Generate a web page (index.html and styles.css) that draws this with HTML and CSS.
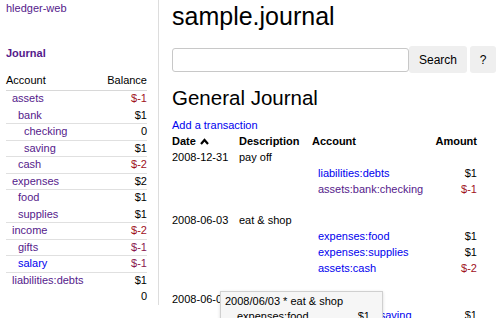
FILE: index.html
```html
<!DOCTYPE html>
<html lang="en">
<head>
  <meta charset="UTF-8" />
  <title>sample.journal - hledger-web</title>
  <link rel="stylesheet" href="styles.css">
</head>
<body>

  <div class="sidebar">
    <a class="brand" href="#">hledger-web</a>
    <a class="journal-link" href="#">Journal</a>
    <table class="balances">
      <tr class="head">
        <th>Account</th>
        <th class="amt">Balance</th>
      </tr>
      <tr><td class="d0"><a href="#">assets</a></td><td class="amt neg">$-1</td></tr>
      <tr><td class="d1"><a href="#">bank</a></td><td class="amt">$1</td></tr>
      <tr class="sep"><td class="d2"><a href="#">checking</a></td><td class="amt">0</td></tr>
      <tr class="sep"><td class="d2"><a href="#">saving</a></td><td class="amt">$1</td></tr>
      <tr class="sep"><td class="d1"><a href="#">cash</a></td><td class="amt neg">$-2</td></tr>
      <tr class="sep"><td class="d0"><a href="#">expenses</a></td><td class="amt">$2</td></tr>
      <tr class="sep"><td class="d1"><a href="#">food</a></td><td class="amt">$1</td></tr>
      <tr><td class="d1"><a href="#">supplies</a></td><td class="amt">$1</td></tr>
      <tr class="sep"><td class="d0"><a href="#">income</a></td><td class="amt neg">$-2</td></tr>
      <tr class="sep"><td class="d1"><a href="#">gifts</a></td><td class="amt neg2">$-1</td></tr>
      <tr class="sep"><td class="d1"><a class="fresh" href="#">salary</a></td><td class="amt neg2">$-1</td></tr>
      <tr class="sep"><td class="d0"><a href="#">liabilities:debts</a></td><td class="amt">$1</td></tr>
      <tr><td></td><td class="amt">0</td></tr>
    </table>
  </div>

  <div class="main">
    <h1>sample.journal</h1>
    <form class="search">
      <input type="text" class="search-box">
      <button type="button" class="btn">Search</button>
      <button type="button" class="btn help">?</button>
    </form>
    <h2>General Journal</h2>
    <a class="add-link" href="#">Add a transaction</a>

    <table class="journal">
      <tr class="head">
        <th class="c-date">Date
          <svg class="sort-icon" width="9" height="7" viewBox="0 0 9 7"><path d="M1 6 L4.5 2 L8 6" fill="none" stroke="#000" stroke-width="2.2"/></svg>
        </th>
        <th class="c-desc">Description</th>
        <th class="c-acct">Account</th>
        <th class="amt">Amount</th>
      </tr>
      <tr><td>2008-12-31</td><td>pay off</td><td></td><td></td></tr>
      <tr class="posting"><td></td><td></td><td><a class="fresh" href="#">liabilities:debts</a></td><td class="amt">$1</td></tr>
      <tr class="posting"><td></td><td></td><td><a href="#">assets:bank:checking</a></td><td class="amt neg">$-1</td></tr>
      <tr class="blank"><td colspan="4"></td></tr>
      <tr><td>2008-06-03</td><td>eat &amp; shop</td><td></td><td></td></tr>
      <tr class="posting"><td></td><td></td><td><a class="fresh" href="#">expenses:food</a></td><td class="amt">$1</td></tr>
      <tr class="posting"><td></td><td></td><td><a class="fresh" href="#">expenses:supplies</a></td><td class="amt">$1</td></tr>
      <tr class="posting"><td></td><td></td><td><a class="fresh" href="#">assets:cash</a></td><td class="amt neg">$-2</td></tr>
      <tr class="blank"><td colspan="4"></td></tr>
      <tr><td>2008-06-02</td><td>save</td><td></td><td></td></tr>
      <tr class="posting"><td></td><td></td><td><a class="fresh" href="#">assets:bank:saving</a></td><td class="amt">$1</td></tr>
    </table>

    <div class="tip">
      <div>2008/06/03 * eat &amp; shop</div>
      <div class="tip-line"><span>expenses:food</span><span>$1</span></div>
    </div>
  </div>

</body>
</html>
```

FILE: styles.css
```css
* {
  box-sizing: border-box;
}
body {
  margin: 0;
  display: flex;
  align-items: flex-start;
  font-family: "Liberation Sans", Arial, sans-serif;
  font-size: 11px;
  color: #000;
  background: #fff;
}
a {
  color: #551a8b;
  text-decoration: none;
}
a.fresh {
  color: #0000ee;
}
table {
  border-collapse: collapse;
}
th {
  text-align: left;
  font-weight: normal;
}
td, th {
  padding: 0;
}
.amt {
  text-align: right;
}
.neg {
  color: #a0101c;
}
.neg2 {
  color: #8a1450;
}

/* sidebar */
.sidebar {
  width: 159px;
  height: 305px;
  flex-shrink: 0;
  padding: 0 11px 0 6px;
  border-right: 1px solid #ddd;
}
.brand {
  display: block;
  line-height: 16px;
}
.journal-link {
  display: block;
  margin-top: 29px;
  line-height: 16px;
  font-weight: bold;
}
.balances {
  width: 141px;
  margin-top: 11px;
}
.balances .head th {
  line-height: 16px;
  padding-bottom: 2px;
  border-bottom: 1px solid #d8d8d8;
}
.balances td {
  line-height: 15.5px;
  border-top: 1px solid transparent;
}
.balances tr.sep td {
  border-top-color: #e0e0e0;
}
.balances .d0 { padding-left: 6px; }
.balances .d1 { padding-left: 12px; }
.balances .d2 { padding-left: 18px; }

/* main */
.main {
  position: relative;
  flex: 1;
  padding: 0 7px 0 13px;
}
h1 {
  margin: 2px 0 0;
  font-size: 25px;
  font-weight: normal;
  line-height: 28px;
}
.search {
  display: flex;
  align-items: center;
  margin: 16px 0 0;
}
.search-box {
  width: 237px;
  height: 24px;
  margin: 0;
  border: 1px solid #c8c8c8;
  border-radius: 3px;
}
.btn {
  height: 27px;
  margin: 0 3px 0 0;
  padding: 0 10px;
  border: none;
  border-radius: 3px;
  background: #efefef;
  font-family: "Liberation Sans", Arial, sans-serif;
  font-size: 12px;
  color: #000;
}
.btn.help {
  width: 26px;
  padding: 0;
}
h2 {
  margin: 13px 0 0;
  font-size: 20.5px;
  font-weight: normal;
  line-height: 24px;
}
.add-link {
  display: block;
  margin-top: 7px;
  line-height: 16px;
  color: #0000ee;
}
.journal {
  width: 305px;
}
.journal th {
  font-weight: bold;
  line-height: 16px;
}
.journal td {
  line-height: 16px;
}
.journal .blank td {
  height: 15px;
  line-height: 15px;
}
.c-date {
  width: 67px;
}
.c-desc {
  width: 73px;
}
.journal .posting td:nth-child(3) {
  padding-left: 6px;
}
.sort-icon {
  margin-left: 1px;
}

/* hover popup */
.tip {
  position: absolute;
  left: 61px;
  top: 291px;
  width: 163px;
  padding: 2px 4px;
  background: #f6f6f6;
  border: 1px solid #d0d0d0;
  box-shadow: 0 1px 3px rgba(0, 0, 0, 0.15);
  line-height: 15px;
}
.tip-line {
  display: flex;
  justify-content: space-between;
  padding: 0 8px 0 12px;
}
```
